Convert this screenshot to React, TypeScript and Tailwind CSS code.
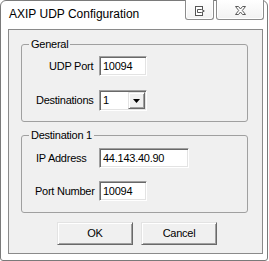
import React from 'react';

function Field({ value, w }: { value: string; w: string }) {
  return (
    <div
      className={`${w} h-[20px] bg-white border border-t-[#a0a0a0] border-l-[#a0a0a0] border-r-white border-b-white shadow-[inset_1px_1px_0_#696969,inset_-1px_-1px_0_#e3e3e3] pl-[3px] flex items-center leading-[13px]`}
    >
      {value}
    </div>
  );
}

function Combo({ value }: { value: string }) {
  return (
    <div className="w-[48px] h-[21px] bg-white border border-t-[#a0a0a0] border-l-[#a0a0a0] border-r-white border-b-white shadow-[inset_1px_1px_0_#696969,inset_-1px_-1px_0_#e3e3e3] p-[1px] flex items-center">
      <div className="flex-1 pl-[2px] leading-[13px]">{value}</div>
      <div className="w-[17px] h-[17px] bg-[#f0f0f0] border border-t-[#e3e3e3] border-l-[#e3e3e3] border-r-[#696969] border-b-[#696969] shadow-[inset_1px_1px_0_#fff,inset_-1px_-1px_0_#a0a0a0] flex items-center justify-center">
        <svg width="7" height="4" viewBox="0 0 7 4">
          <path d="M0 0H7L3.5 4Z" fill="#000" />
        </svg>
      </div>
    </div>
  );
}

function Button({ label }: { label: string }) {
  return (
    <div className="w-[76px] h-[23px] bg-[#f0f0f0] border border-t-[#e3e3e3] border-l-[#e3e3e3] border-r-[#696969] border-b-[#696969] shadow-[inset_1px_1px_0_#fff,inset_-1px_-1px_0_#a0a0a0] flex items-center justify-center leading-[13px]">
      {label}
    </div>
  );
}

export default function App() {
  return (
    <div className="w-[269px] h-[261px] bg-white text-black text-[11px] tracking-[-0.25px] font-['Liberation_Sans',Arial,sans-serif]">
      <div className="relative w-[268px] h-[261px] border border-[#7a7a7a] rounded-t-[6px] rounded-b-[3px] bg-white flex flex-col">
        {/* Title bar */}
        <div className="h-[28px] pl-[8px] pt-[6px] text-[12px] tracking-normal leading-[15px]">
          AXIP UDP Configuration
        </div>

        {/* Caption buttons */}
        <div className="absolute top-[-1px] right-[3px] flex gap-[2px]">
          <div className="w-[29px] h-[20px] border border-t-0 border-[#8c8c8c] rounded-b-[3px] bg-gradient-to-b from-white to-[#f2f2f2] shadow-[inset_1px_0_0_#fff,inset_-1px_-1px_0_#fff] flex items-center justify-center">
            <svg width="10" height="10" viewBox="0 0 10 10" className="mt-[2px]">
              <rect x="0.5" y="0.5" width="7" height="9" fill="#fff" stroke="#555" />
              <path d="M2.5 3.5H6.5L9.3 5L6.5 6.5H2.5Z" fill="#fff" stroke="#555" />
            </svg>
          </div>
          <div className="w-[48px] h-[20px] border border-t-0 border-[#8c8c8c] rounded-b-[3px] bg-gradient-to-b from-white to-[#f2f2f2] shadow-[inset_1px_0_0_#fff,inset_-1px_-1px_0_#fff] flex items-center justify-center">
            <svg width="11" height="9" viewBox="0 0 11 9" className="mt-[1px]">
              <path
                d="M0.5 0.5H3.5L5.5 3L7.5 0.5H10.5L7.3 4.5L10.5 8.5H7.5L5.5 6L3.5 8.5H0.5L3.7 4.5Z"
                fill="#fff"
                stroke="#5a5a5a"
              />
            </svg>
          </div>
        </div>

        {/* Client area */}
        <div className="ml-[7px] w-[255px] h-[225px] border border-[#8a8a8a] bg-[#f0f0f0] pl-[12px] flex flex-col">
          <fieldset className="mt-[8px] w-[227px] border border-[#a0a0a0] rounded-[3px] pt-[5px] pb-[10px]">
            <legend className="ml-[7px] px-[2px] leading-[13px]">General</legend>
            <div className="grid grid-cols-[77px_auto] items-center gap-y-[14px]">
              <div className="pl-[27px]">UDP Port</div>
              <Field value="10094" w="w-[48px]" />
              <div className="pl-[14px]">Destinations</div>
              <Combo value="1" />
            </div>
          </fieldset>

          <fieldset className="mt-[7px] w-[227px] border border-[#a0a0a0] rounded-[3px] pt-[6px] pb-[11px]">
            <legend className="ml-[7px] px-[2px] leading-[13px]">Destination 1</legend>
            <div className="grid grid-cols-[77px_auto] items-center gap-y-[13px]">
              <div className="pl-[14px]">IP Address</div>
              <Field value="44.143.40.90" w="w-[90px]" />
              <div className="pl-[13px]">Port Number</div>
              <Field value="10094" w="w-[48px]" />
            </div>
          </fieldset>

          <div className="mt-[9px] ml-[36px] flex gap-[8px]">
            <Button label="OK" />
            <Button label="Cancel" />
          </div>
        </div>
      </div>
    </div>
  );
}
